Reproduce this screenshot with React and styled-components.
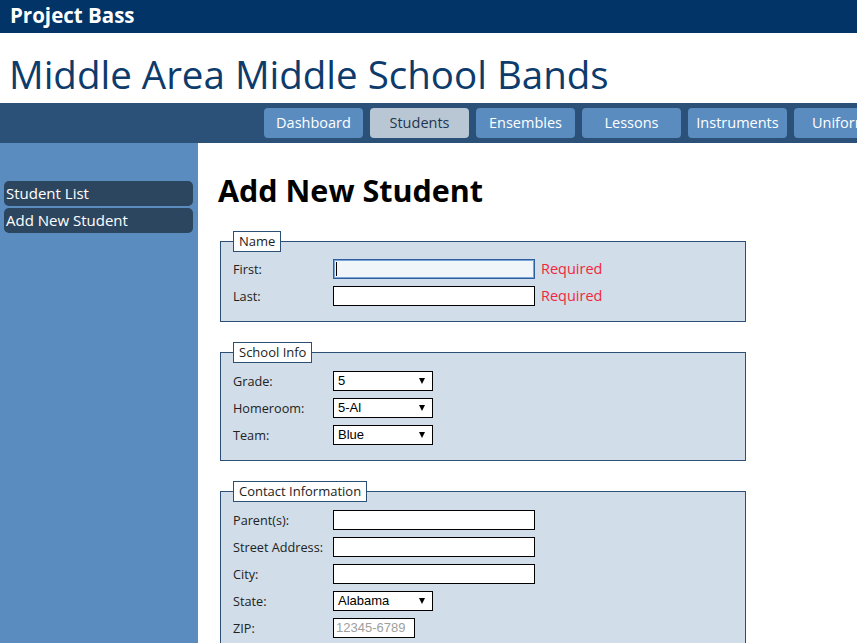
import React from "react";
import styled, { createGlobalStyle } from "styled-components";

const Global = createGlobalStyle`
  html, body { margin: 0; padding: 0; background: #fff; }
  body { font-family: "Open Sans", "Noto Sans", sans-serif; overflow: hidden; }
  * { box-sizing: border-box; }
`;

const Page = styled.div`
  width: 857px;
  height: 643px;
  display: flex;
  flex-direction: column;
  overflow: hidden;
`;

const TopBar = styled.div`
  height: 33px;
  background: #023468;
  color: #fff;
  font-weight: 700;
  font-size: 20.5px;
  line-height: 30px;
  padding-left: 10px;
  flex: none;
`;

const Header = styled.div`
  height: 70px;
  flex: none;
  display: flex;
  align-items: flex-end;
  padding: 0 0 5px 9px;
`;

const Title = styled.h1`
  margin: 0;
  font-weight: 400;
  font-size: 38.5px;
  line-height: 48px;
  color: #0d3b6c;
  white-space: nowrap;
`;

const NavBar = styled.nav`
  height: 40px;
  flex: none;
  background: #2b5179;
  display: flex;
  gap: 7px;
  padding: 5px 0 0 264px;
  overflow: hidden;
  white-space: nowrap;
`;

const Tab = styled.div`
  flex: none;
  width: 99px;
  height: 30px;
  border-radius: 4px;
  background: ${(p) => (p.$active ? "#b9c6d4" : "#5a8cbf")};
  color: ${(p) => (p.$active ? "#1e3650" : "#fff")};
  font-size: 14.5px;
  line-height: 30px;
  text-align: center;
`;

const Body = styled.div`
  flex: 1;
  display: grid;
  grid-template-columns: 198px 1fr;
  min-height: 0;
`;

const Sidebar = styled.aside`
  background: #5a8cbf;
  padding: 38px 5px 0 4px;
  display: flex;
  flex-direction: column;
  gap: 2px;
`;

const SideItem = styled.div`
  height: 25px;
  background: #2d4660;
  color: #fff;
  border-radius: 5px;
  font-size: 15px;
  line-height: 25px;
  padding-left: 2px;
  white-space: nowrap;
`;

const Main = styled.main`
  padding: 26px 0 0 20px;
`;

const Heading = styled.h2`
  margin: 0 0 20px 0;
  font-size: 30.5px;
  font-weight: 700;
  line-height: 42px;
  color: #000;
  white-space: nowrap;
`;

const Fieldset = styled.fieldset`
  width: 526px;
  margin: 0 0 20px 2px;
  padding: ${(p) => p.$pt ?? 4}px 12px 12px 12px;
  border: 1px solid #2c4f76;
  background: #d1dde8;
  min-width: 0;
`;

const Legend = styled.legend`
  background: #fff;
  border: 1px solid #2c4f76;
  padding: 0 5px;
  font-size: 13px;
  line-height: 19px;
  color: #222;
  margin-left: 0;
  white-space: nowrap;
`;

const Row = styled.div`
  display: flex;
  align-items: center;
  height: 27px;
`;

const Label = styled.label`
  width: 100px;
  flex: none;
  font-size: 12.7px;
  color: #222;
  white-space: nowrap;
`;

const TextInput = styled.input`
  width: ${(p) => p.$w || 202}px;
  height: 20px;
  border: 1px solid #000;
  background: #fff;
  padding: 0 2px;
  font-family: "Liberation Sans", Arial, sans-serif;
  font-size: 13px;
  outline: none;
  &::placeholder { color: #a0a0a0; }
`;

const Caret = styled.span`
  width: 1px;
  height: 14px;
  background: #000;
  margin-left: 2px;
`;

const FocusBox = styled.div`
  width: 202px;
  height: 20px;
  border: 1px solid #2f5fa0;
  background: #f0f5fa;
  box-shadow: inset 0 0 0 1px #7aa3d8;
  display: flex;
  align-items: center;
  flex: none;
`;

const Select = styled.div`
  width: 100px;
  height: 20px;
  border: 1px solid #000;
  background: #fff;
  display: flex;
  align-items: center;
  justify-content: space-between;
  padding: 0 7px 0 4px;
  font-family: "Liberation Sans", Arial, sans-serif;
  font-size: 13px;
  color: #000;
`;

const Arrow = styled.span`
  width: 0;
  height: 0;
  border-left: 3.5px solid transparent;
  border-right: 3.5px solid transparent;
  border-top: 6px solid #000;
`;

const Required = styled.span`
  margin-left: 6px;
  color: #f5263b;
  font-size: 14.5px;
`;

const Field = ({ label, children }) => (
  <Row>
    <Label>{label}</Label>
    {children}
  </Row>
);

const Drop = ({ value }) => (
  <Select>
    <span>{value}</span>
    <Arrow />
  </Select>
);

export default function App() {
  const tabs = ["Dashboard", "Students", "Ensembles", "Lessons", "Instruments", "Uniforms"];
  return (
    <>
      <Global />
      <Page>
        <TopBar>Project Bass</TopBar>
        <Header>
          <Title>Middle Area Middle School Bands</Title>
        </Header>
        <NavBar>
          {tabs.map((t) => (
            <Tab key={t} $active={t === "Students"}>{t}</Tab>
          ))}
        </NavBar>
        <Body>
          <Sidebar>
            <SideItem>Student List</SideItem>
            <SideItem>Add New Student</SideItem>
          </Sidebar>
          <Main>
            <Heading>Add New Student</Heading>
            <Fieldset $pt={3}>
              <Legend>Name</Legend>
              <Field label="First:">
                <FocusBox><Caret /></FocusBox>
                <Required>Required</Required>
              </Field>
              <Field label="Last:">
                <TextInput />
                <Required>Required</Required>
              </Field>
            </Fieldset>
            <Fieldset>
              <Legend>School Info</Legend>
              <Field label="Grade:"><Drop value="5" /></Field>
              <Field label="Homeroom:"><Drop value="5-Al" /></Field>
              <Field label="Team:"><Drop value="Blue" /></Field>
            </Fieldset>
            <Fieldset>
              <Legend>Contact Information</Legend>
              <Field label="Parent(s):"><TextInput /></Field>
              <Field label="Street Address:"><TextInput /></Field>
              <Field label="City:"><TextInput /></Field>
              <Field label="State:"><Drop value="Alabama" /></Field>
              <Field label="ZIP:"><TextInput $w={82} placeholder="12345-6789" /></Field>
            </Fieldset>
          </Main>
        </Body>
      </Page>
    </>
  );
}
